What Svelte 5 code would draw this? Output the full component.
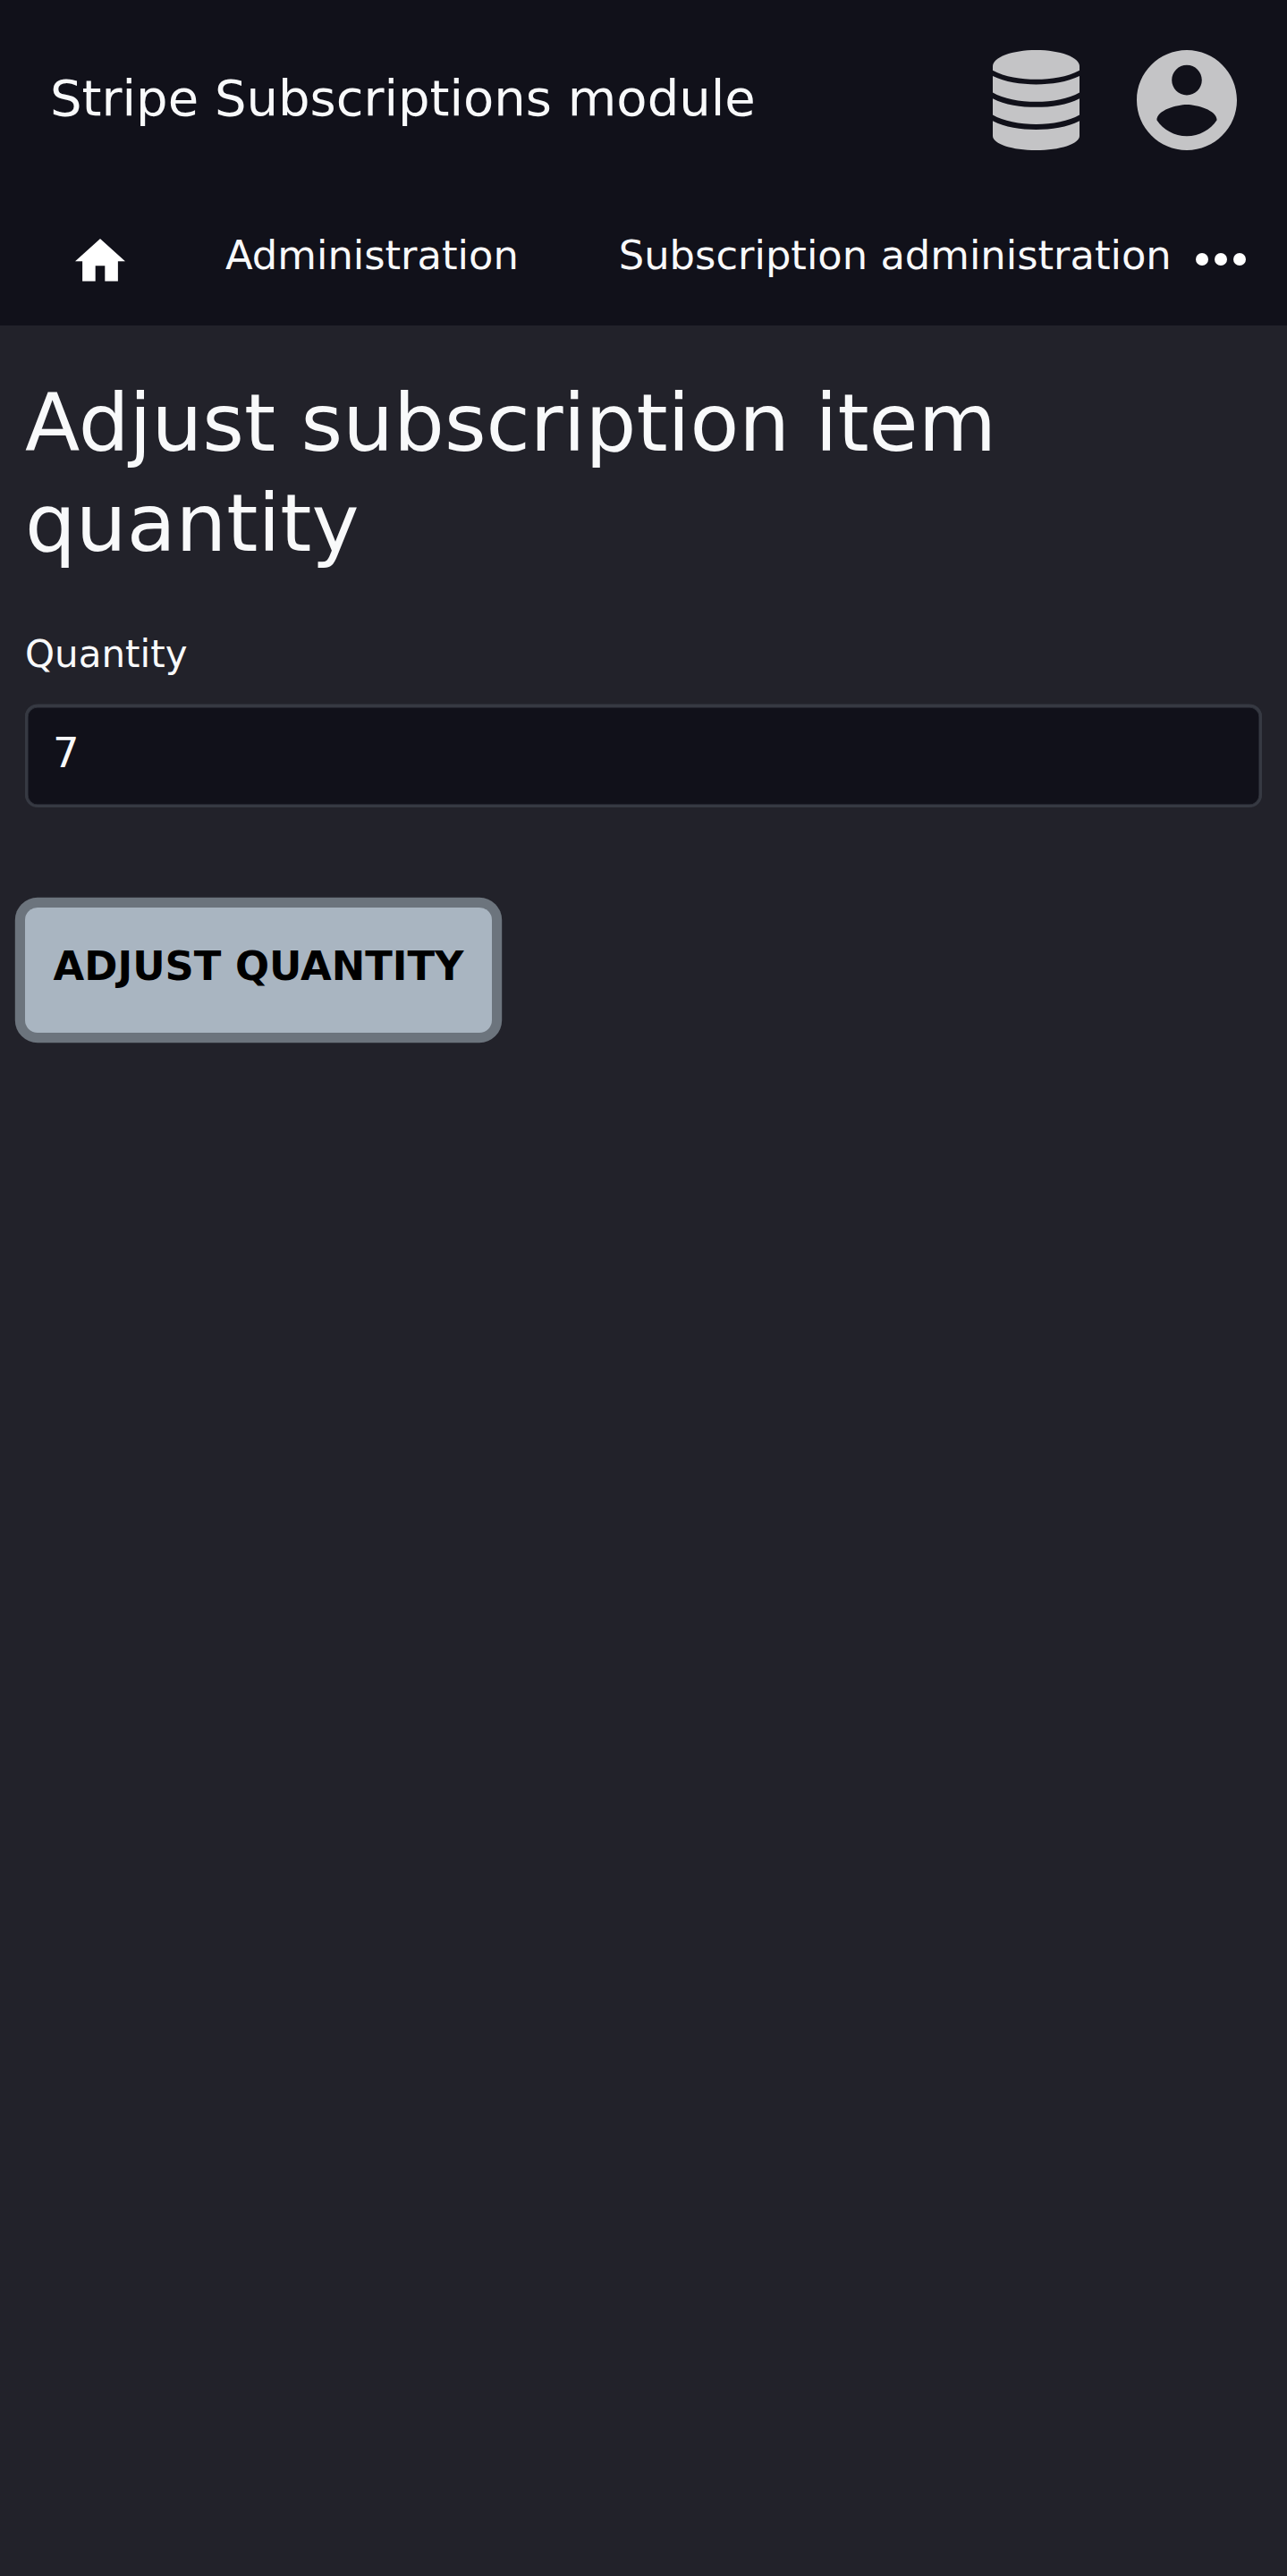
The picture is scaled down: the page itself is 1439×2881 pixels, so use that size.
<script>
  let quantity = $state('7');
</script>

<div class="page">
  <header>
    <div class="top">
      <span class="title">Stripe Subscriptions module</span>
      <svg class="database" viewBox="90 78 291 335" preserveAspectRatio="none" aria-hidden="true">
        <path d="M90 146V132C90 102 155 78 235.500 78S381 102 381 132V146C340 168 285 176 235.500 176S130 168 90 146Z" />
        <path d="M90 165C130 185 185 193 235.500 193S340 185 381 165V220C345 241 290 251 235.500 251S125 241 90 220Z" />
        <path d="M90 240C130 261 185 269 235.500 269S340 261 381 240V295C345 316 290 326 235.500 326S125 316 90 295Z" />
        <path d="M90 315C130 336 185 344 235.500 344S340 336 381 315V365C381 392 315 413 235.500 413S90 392 90 365Z" />
      </svg>
      <svg class="account" viewBox="2 2 20 20" aria-hidden="true">
        <path d="M12 2C6.480 2 2 6.480 2 12s4.480 10 10 10 10-4.480 10-10S17.520 2 12 2zm0 3c1.660 0 3 1.340 3 3s-1.340 3-3 3-3-1.340-3-3 1.340-3 3-3zm0 14.200c-2.500 0-4.710-1.280-6-3.220.03-1.990 4-3.080 6-3.080 1.990 0 5.970 1.090 6 3.080-1.290 1.940-3.500 3.220-6 3.220z" />
      </svg>
    </div>
    <nav>
      <svg class="home" viewBox="2 3 20 17" aria-hidden="true">
        <path d="M10.100 20v-6.200h3.800V20h5.200v-8H22L12 3 2 12h2.900v8z" />
      </svg>
      <span class="link">Administration</span>
      <span class="link">Subscription administration</span>
      <svg class="more" viewBox="0 0 56 14" aria-hidden="true">
        <circle cx="7" cy="7" r="7" />
        <circle cx="28" cy="7" r="7" />
        <circle cx="49" cy="7" r="7" />
      </svg>
    </nav>
  </header>

  <main>
    <h1>Adjust subscription item quantity</h1>
    <label for="quantity">Quantity</label>
    <input id="quantity" bind:value={quantity} />
    <button>Adjust quantity</button>
  </main>
</div>

<style>
  :global(body) {
    margin: 0;
    background: #22222a;
  }
  .page {
    min-height: 2881px;
    background: #22222a;
    color: #f8f9fa;
    font-family: 'DejaVu Sans', sans-serif;
  }
  header {
    height: 364px;
    background: #11111a;
  }
  .top {
    display: flex;
    align-items: center;
    height: 224px;
    padding: 0 56.500px 0 56px;
    box-sizing: border-box;
  }
  .title {
    flex: 1;
    font-size: 56px;
    line-height: 83px;
    margin-top: -5px;
    white-space: nowrap;
  }
  .database {
    width: 97px;
    height: 112px;
    margin-right: 63.500px;
    fill: #c4c4c6;
  }
  .account {
    width: 112px;
    height: 112px;
    fill: #c4c4c6;
  }
  nav {
    display: flex;
    align-items: flex-start;
    padding: 28px 0 0 84px;
  }
  .home {
    width: 56px;
    height: 47.600px;
    margin: 15px 112px 0 0;
    fill: #fff;
  }
  .link {
    font-size: 44.800px;
    line-height: 67px;
    white-space: nowrap;
  }
  .link + .link {
    margin-left: 112px;
  }
  .more {
    width: 56px;
    height: 14px;
    margin: 31px 46px 0 auto;
    fill: #fff;
  }
  main {
    display: flex;
    flex-direction: column;
    align-items: flex-start;
    padding: 53px 28px 0;
  }
  h1 {
    margin: 0;
    font-size: 89.600px;
    font-weight: 400;
    line-height: 112px;
  }
  label {
    margin-top: 59px;
    font-size: 42px;
    line-height: 63px;
  }
  input {
    box-sizing: border-box;
    width: 100%;
    height: 115px;
    margin-top: 25px;
    padding: 0 28px 8px;
    border: 3px solid #363942;
    border-radius: 14px;
    box-shadow: 0 -0.500px 0 #363942, inset 0 0 0 0.500px #363942;
    background: #11111a;
    color: #f8f9fa;
    font: 46.600px 'DejaVu Sans', sans-serif;
    outline: none;
  }
  button {
    width: 522px;
    height: 140px;
    margin-top: 112px;
    padding: 0 0 9px;
    border: 0;
    border-radius: 14px;
    background: #a9b5c1;
    box-shadow: 0 0 0 11.200px #6c747d;
    color: #000;
    font: bold 44.800px 'DejaVu Sans', sans-serif;
    text-transform: uppercase;
    white-space: nowrap;
  }
</style>
